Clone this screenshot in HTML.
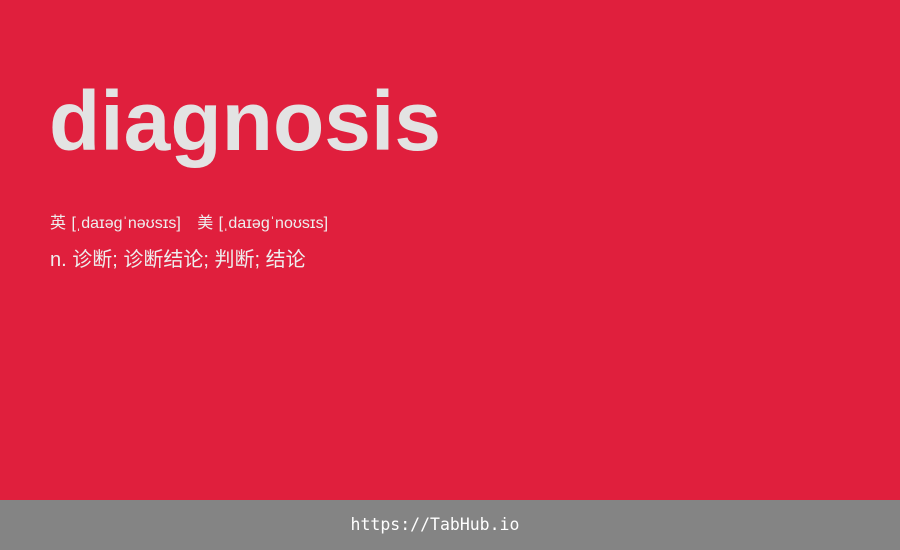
<!DOCTYPE html>
<html><head><meta charset="utf-8"><style>
html,body{margin:0;padding:0}
body{width:900px;height:550px;background:#e01f3d;position:relative;overflow:hidden;font-family:"Liberation Sans","Noto Sans CJK SC",sans-serif;}
.w{position:absolute;left:49px;top:71px;font-weight:bold;font-size:84px;letter-spacing:0px;color:#e3e3e3;line-height:100px;}
.p{position:absolute;left:50px;top:213px;font-size:16px;color:#eeeeee;line-height:22px;white-space:pre;word-spacing:1px;}
.d{position:absolute;left:50px;top:246px;font-size:20px;color:#eeeeee;line-height:28px;}
.f{position:absolute;left:0;top:500px;width:870px;height:50px;background:#848484;color:#fff;font-family:"DejaVu Sans Mono","Liberation Mono",monospace;font-size:16.5px;line-height:50px;text-align:center;padding-right:30px;}
</style></head><body>
<div class="w">diagnosis</div>
<div class="p">英 [ˌdaɪəgˈnəʊsɪs]   美 [ˌdaɪəgˈnoʊsɪs]</div>
<div class="d">n. 诊断; 诊断结论; 判断; 结论</div>
<div class="f">https://TabHub.io</div>
</body></html>
